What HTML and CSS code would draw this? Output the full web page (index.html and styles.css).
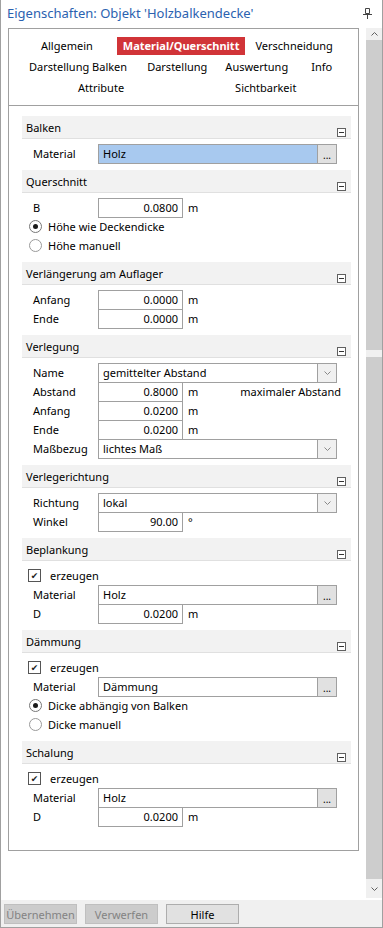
FILE: index.html
```html
<!DOCTYPE html>
<html lang="de">

<head>
    <meta charset="UTF-8">
    <meta name="viewport" content="width=device-width, initial-scale=1.0">
    <title>Eigenschaften</title>
    <link rel="stylesheet" href="styles.css">
</head>

<body>

    <div class="window">
        <div class="titlebar">
            <span class="title">Eigenschaften: Objekt 'Holzbalkendecke'</span>
            <svg class="pin" width="9" height="11" viewBox="0 0 9 11">
                <path d="M2.5 0.5h4v5h-4z" fill="none" stroke="#444" />
                <path d="M0 6.5h9" stroke="#444" />
                <path d="M4.5 7v4" stroke="#444" />
            </svg>
        </div>

        <div class="main">
            <div class="panel">
                <!-- tab links -->
                <div class="tabs">
                    <div class="tabs-row row-1">
                        <span class="tab t-allg">Allgemein</span>
                        <span class="tab active t-mat">Material/Querschnitt</span>
                        <span class="tab">Verschneidung</span>
                    </div>
                    <div class="tabs-row row-2">
                        <span class="tab t-db">Darstellung Balken</span>
                        <span class="tab t-d">Darstellung</span>
                        <span class="tab t-a">Auswertung</span>
                        <span class="tab">Info</span>
                    </div>
                    <div class="tabs-row row-3">
                        <span class="tab t-attr">Attribute</span>
                        <span class="tab">Sichtbarkeit</span>
                    </div>
                </div>

                <div class="content">

                    <div class="group">
                        <div class="group-head"><span>Balken</span><span class="collapse"></span></div>
                        <div class="group-body">
                            <div class="row">
                                <label>Material</label>
                                <div class="field wide selected"><span class="val">Holz</span><span class="dots">...</span></div>
                            </div>
                        </div>
                    </div>

                    <div class="group">
                        <div class="group-head"><span>Querschnitt</span><span class="collapse"></span></div>
                        <div class="group-body">
                            <div class="row">
                                <label>B</label>
                                <div class="field small"><span class="num">0.0800</span></div>
                                <span class="unit">m</span>
                            </div>
                            <div class="row option"><span class="radio checked"></span>Höhe wie Deckendicke</div>
                            <div class="row option"><span class="radio"></span>Höhe manuell</div>
                        </div>
                    </div>

                    <div class="group">
                        <div class="group-head"><span>Verlängerung am Auflager</span><span class="collapse"></span></div>
                        <div class="group-body">
                            <div class="row">
                                <label>Anfang</label>
                                <div class="field small"><span class="num">0.0000</span></div>
                                <span class="unit">m</span>
                            </div>
                            <div class="row">
                                <label>Ende</label>
                                <div class="field small"><span class="num">0.0000</span></div>
                                <span class="unit">m</span>
                            </div>
                        </div>
                    </div>

                    <div class="group">
                        <div class="group-head"><span>Verlegung</span><span class="collapse"></span></div>
                        <div class="group-body">
                            <div class="row">
                                <label>Name</label>
                                <div class="field wide"><span class="val">gemittelter Abstand</span><span class="arrow"><svg width="7" height="4" viewBox="0 0 7 4"><path d="M0.5 0.5l3 3l3-3" fill="none" stroke="#888" /></svg></span></div>
                            </div>
                            <div class="row">
                                <label>Abstand</label>
                                <div class="field small"><span class="num">0.8000</span></div>
                                <span class="unit">m</span>
                                <span class="note">maximaler Abstand</span>
                            </div>
                            <div class="row">
                                <label>Anfang</label>
                                <div class="field small"><span class="num">0.0200</span></div>
                                <span class="unit">m</span>
                            </div>
                            <div class="row">
                                <label>Ende</label>
                                <div class="field small"><span class="num">0.0200</span></div>
                                <span class="unit">m</span>
                            </div>
                            <div class="row">
                                <label>Maßbezug</label>
                                <div class="field wide"><span class="val">lichtes Maß</span><span class="arrow"><svg width="7" height="4" viewBox="0 0 7 4"><path d="M0.5 0.5l3 3l3-3" fill="none" stroke="#888" /></svg></span></div>
                            </div>
                        </div>
                    </div>

                    <div class="group">
                        <div class="group-head"><span>Verlegerichtung</span><span class="collapse"></span></div>
                        <div class="group-body">
                            <div class="row">
                                <label>Richtung</label>
                                <div class="field wide"><span class="val">lokal</span><span class="arrow"><svg width="7" height="4" viewBox="0 0 7 4"><path d="M0.5 0.5l3 3l3-3" fill="none" stroke="#888" /></svg></span></div>
                            </div>
                            <div class="row">
                                <label>Winkel</label>
                                <div class="field small"><span class="num">90.00</span></div>
                                <span class="unit">°</span>
                            </div>
                        </div>
                    </div>

                    <div class="group">
                        <div class="group-head"><span>Beplankung</span><span class="collapse"></span></div>
                        <div class="group-body">
                            <div class="row check-row"><span class="check">&#10004;</span>erzeugen</div>
                            <div class="row">
                                <label>Material</label>
                                <div class="field wide"><span class="val">Holz</span><span class="dots">...</span></div>
                            </div>
                            <div class="row">
                                <label>D</label>
                                <div class="field small"><span class="num">0.0200</span></div>
                                <span class="unit">m</span>
                            </div>
                        </div>
                    </div>

                    <div class="group">
                        <div class="group-head"><span>Dämmung</span><span class="collapse"></span></div>
                        <div class="group-body">
                            <div class="row check-row"><span class="check">&#10004;</span>erzeugen</div>
                            <div class="row">
                                <label>Material</label>
                                <div class="field wide"><span class="val">Dämmung</span><span class="dots">...</span></div>
                            </div>
                            <div class="row option"><span class="radio checked"></span>Dicke abhängig von Balken</div>
                            <div class="row option"><span class="radio"></span>Dicke manuell</div>
                        </div>
                    </div>

                    <div class="group">
                        <div class="group-head"><span>Schalung</span><span class="collapse"></span></div>
                        <div class="group-body">
                            <div class="row check-row"><span class="check">&#10004;</span>erzeugen</div>
                            <div class="row">
                                <label>Material</label>
                                <div class="field wide"><span class="val">Holz</span><span class="dots">...</span></div>
                            </div>
                            <div class="row">
                                <label>D</label>
                                <div class="field small"><span class="num">0.0200</span></div>
                                <span class="unit">m</span>
                            </div>
                        </div>
                    </div>

                </div>
            </div>

            <div class="scrollbar">
                <div class="sb-btn"><svg width="7" height="4" viewBox="0 0 7 4"><path d="M0.5 3.5l3-3l3 3" fill="none" stroke="#606060" /></svg></div>
                <div class="sb-thumb"></div>
                <div class="sb-gap"></div>
                <div class="sb-track"></div>
                <div class="sb-btn"><svg width="7" height="4" viewBox="0 0 7 4"><path d="M0.5 0.5l3 3l3-3" fill="none" stroke="#606060" /></svg></div>
            </div>
        </div>

        <div class="footer">
            <button class="disabled">Übernehmen</button>
            <button class="disabled">Verwerfen</button>
            <button>Hilfe</button>
        </div>
    </div>

</body>

</html>
```

FILE: styles.css
```css
body {
    margin: 0;
    font-family: "Noto Sans", "DejaVu Sans", sans-serif;
    font-size: 11px;
    color: #000;
    background-color: #fff;
}

.window {
    width: 383px;
    height: 928px;
    box-sizing: border-box;
    border-left: 1px solid #a0a0a0;
    border-right: 1px solid #a0a0a0;
    border-bottom: 1px solid #a0a0a0;
    display: flex;
    flex-direction: column;
}

.titlebar {
    height: 28px;
    display: flex;
    align-items: flex-start;
    justify-content: space-between;
    padding: 3px 10px 0 6px;
    box-sizing: border-box;
}

.title {
    color: #2b62b0;
    font-size: 13px;
    line-height: 20px;
}

.pin {
    margin-top: 5px;
}

.main {
    flex: 1;
    display: flex;
    align-items: flex-start;
}

.panel {
    margin-left: 7px;
    width: 351px;
    height: 823px;
    box-sizing: border-box;
    border: 1px solid #a0a0a0;
}

/* tabs */
.tabs {
    height: 77px;
    padding-top: 6px;
    box-sizing: border-box;
    border-bottom: 1px solid #a0a0a0;
}

.tabs-row {
    display: flex;
    height: 21px;
    align-items: center;
    white-space: nowrap;
}

.tab {
    padding: 0 6px;
    line-height: 18px;
    font-size: 11px;
}

.tab.active {
    background-color: #d13438;
    color: #fff;
    font-weight: bold;
}

.row-1 { padding-left: 26px; }
.t-allg { margin-right: 18px; }
.t-mat { margin-right: 4px; }

.row-2 { padding-left: 14px; }
.t-db { margin-right: 8px; }
.t-d { margin-right: 6px; }
.t-a { margin-right: 11px; }

.row-3 { padding-left: 63px; }
.t-attr { margin-right: 99px; }

/* groups */
.content {
    padding: 10px 7px 0 13px;
}

.group-head {
    height: 23px;
    box-sizing: border-box;
    background-color: #f2f2f2;
    border-bottom: 1px solid #e0e0e0;
    display: flex;
    justify-content: space-between;
    align-items: flex-start;
    padding: 3px 5px 0 4px;
    line-height: 17px;
}

.collapse {
    width: 9px;
    height: 9px;
    box-sizing: border-box;
    border: 1px solid #606060;
    margin-top: 9px;
    position: relative;
    background-color: #fff;
}

.collapse::after {
    content: "";
    position: absolute;
    left: 1px;
    right: 1px;
    top: 3px;
    height: 1px;
    background-color: #333;
}

.group-body {
    padding: 5px 0 7px 0;
}

.row {
    display: flex;
    height: 19px;
    align-items: flex-start;
    padding-left: 11px;
    line-height: 19px;
    white-space: nowrap;
}

.row label {
    width: 65px;
}

.field {
    height: 20px;
    box-sizing: border-box;
    border: 1px solid #a0a0a0;
    background-color: #fff;
    display: flex;
    line-height: 18px;
    position: relative;
}

.field.wide {
    width: 239px;
}

.field.small {
    width: 85px;
    justify-content: flex-end;
}

.field.selected {
    background-color: #a8c9ef;
}

.val {
    flex: 1;
    padding-left: 4px;
}

.num {
    padding-right: 4px;
}

.dots,
.arrow {
    width: 18px;
    border-left: 1px solid #a0a0a0;
    background-color: #e1e1e1;
    text-align: center;
    font-size: 10px;
    line-height: 20px;
}

.arrow {
    background-color: #f0f0f0;
    display: flex;
    align-items: center;
    justify-content: center;
}

.unit {
    margin-left: 5px;
}

.note {
    margin-left: 42px;
}

.option {
    padding-left: 7px;
    align-items: center;
}

.radio {
    width: 13px;
    height: 13px;
    box-sizing: border-box;
    border: 1px solid #9a9a9a;
    border-radius: 50%;
    margin-right: 6px;
    background-color: #fff;
    position: relative;
}

.radio.checked {
    border-color: #777;
}

.radio.checked::after {
    content: "";
    position: absolute;
    left: 3px;
    top: 3px;
    width: 5px;
    height: 5px;
    border-radius: 50%;
    background-color: #1a1a1a;
}

.check-row {
    padding-left: 6px;
    align-items: center;
}

.check {
    width: 13px;
    height: 13px;
    box-sizing: border-box;
    border: 1px solid #555;
    margin-right: 9px;
    font-size: 9px;
    line-height: 11px;
    text-align: center;
    color: #222;
}

/* scrollbar */
.scrollbar {
    margin-left: 7px;
    width: 16px;
    height: 870px;
    display: flex;
    flex-direction: column;
    background-color: #f0f0f0;
}

.sb-btn {
    height: 12px;
    display: flex;
    align-items: center;
    justify-content: center;
}

.sb-btn:last-child {
    height: 19px;
}

.sb-thumb {
    height: 310px;
    background-color: #cdcdcd;
}

.sb-gap {
    height: 7px;
}

.sb-track {
    flex: 1;
    background-color: #cdcdcd;
}

/* footer buttons */
.footer {
    height: 27px;
    background-color: #f0f0f0;
    display: flex;
    align-items: flex-start;
    padding: 4px 0 0 3px;
    box-sizing: border-box;
}

.footer button {
    width: 73px;
    height: 20px;
    margin-right: 8px;
    font-family: "Noto Sans", "DejaVu Sans", sans-serif;
    font-size: 11px;
    background-color: #e1e1e1;
    border: 1px solid #adadad;
    color: #000;
    padding: 0;
}

.footer button.disabled {
    background-color: #cccccc;
    border-color: #bfbfbf;
    color: #838383;
}
```
